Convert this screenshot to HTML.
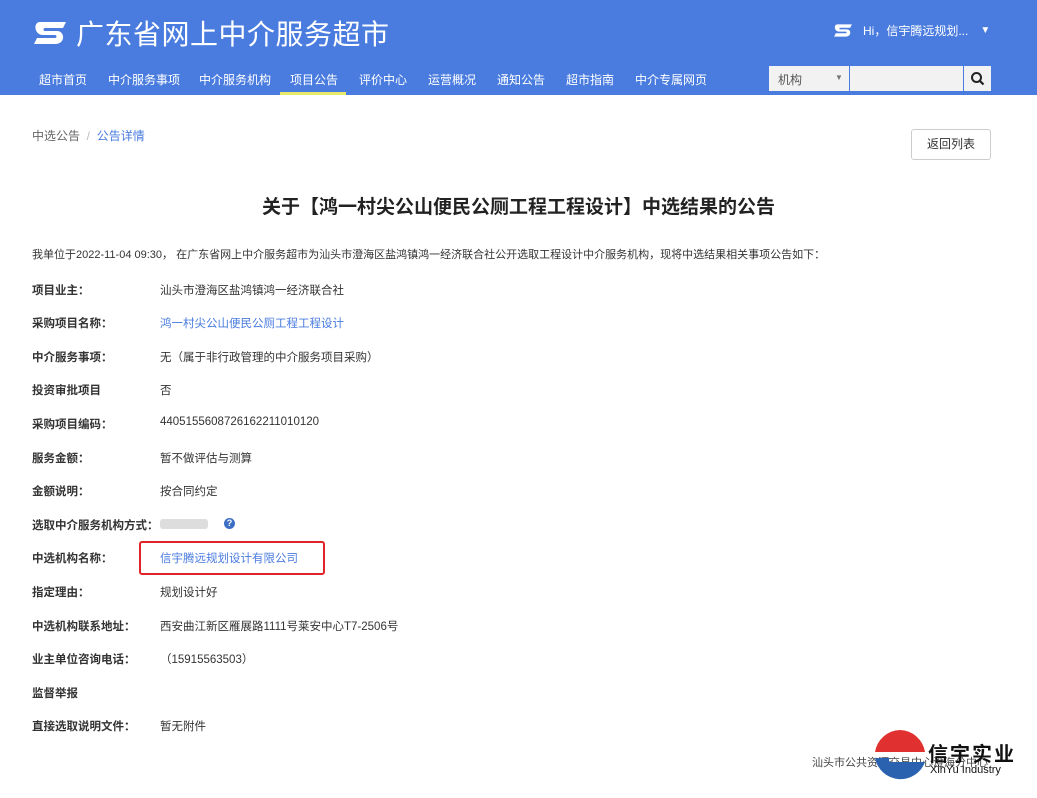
<!DOCTYPE html>
<html><head><meta charset="utf-8"><style>
*{margin:0;padding:0;box-sizing:border-box}
body{width:1037px;height:798px;overflow:hidden;background:#fff;font-family:"Liberation Sans","Noto Sans CJK SC",sans-serif;color:#333;position:relative}
.hdr{position:absolute;left:0;top:0;width:1037px;height:95px;background:#4a7ce0}
.logo{position:absolute;left:32px;top:13px;color:#fff;font-size:28px;display:flex;align-items:center}
.logo span{margin-left:8px;letter-spacing:0.5px}
.nav{position:absolute;top:71px;left:0;font-size:12px;color:#fff}
.nav a{position:absolute;white-space:nowrap;top:0}
.act{position:absolute;left:280px;top:92px;width:66px;height:3px;background:#e8e86a}
.user{position:absolute;left:833px;top:22px;color:#fff;font-size:12px;display:flex;align-items:center}
.sel{position:absolute;left:769px;top:66px;width:80px;height:25px;background:#f2f2f2;font-size:12px;padding:5px 9px;color:#555}
.inp{position:absolute;left:850px;top:66px;width:113px;height:25px;background:#f2f2f2}
.sbtn{position:absolute;left:964px;top:66px;width:27px;height:25px;background:#f2f2f2}
.bc{position:absolute;left:32px;top:127px;font-size:12px;color:#666}
.bc b{font-weight:normal;color:#4a7ce0}
.back{position:absolute;left:911px;top:129px;width:80px;height:31px;border:1px solid #ccc;border-radius:3px;font-size:12px;text-align:center;line-height:29px;color:#333}
h1{position:absolute;left:0;width:1037px;top:192px;text-align:center;font-size:19px;font-weight:bold;color:#222}
.intro{position:absolute;left:32px;top:246px;font-size:11px;white-space:nowrap}
.row{position:absolute;left:32px;font-size:11.5px;white-space:nowrap}
.row .l{position:absolute;left:0;font-weight:bold;color:#333}
.row .v{position:absolute;left:128px}
.blue{color:#4a7ce0}
.redbox{position:absolute;left:139px;top:541px;width:186px;height:34px;border:2px solid #e0252a;border-radius:3px}
.foot{position:absolute;left:812px;top:754px;font-size:11px;color:#444}
</style></head><body>
<div class="hdr">
 <div class="logo"><svg width="36" height="26" viewBox="0 0 36 26"><path d="M8 2h26l-3 6H13c-2 0-2 3 0 3h12c8 0 9 13-2 13H2l3-6h18c2 0 2-3 0-3H11C2 15 1 2 8 2z" fill="#fff"/></svg><span>广东省网上中介服务超市</span></div>
 <div class="user"><svg width="20" height="15" viewBox="0 0 36 26"><path d="M8 2h26l-3 6H13c-2 0-2 3 0 3h12c8 0 9 13-2 13H2l3-6h18c2 0 2-3 0-3H11C2 15 1 2 8 2z" fill="#fff"/></svg><span style="margin-left:10px">Hi，信宇腾远规划...</span><span style="margin-left:12px;font-size:10px">▼</span></div>
 <div class="nav">
  <a style="left:39px">超市首页</a><a style="left:108px">中介服务事项</a><a style="left:199px">中介服务机构</a><a style="left:290px">项目公告</a><a style="left:359px">评价中心</a><a style="left:428px">运营概况</a><a style="left:497px">通知公告</a><a style="left:566px">超市指南</a><a style="left:635px">中介专属网页</a>
 </div>
 <div class="act"></div>
 <div class="sel">机构<span style="position:absolute;left:66px;top:7px;font-size:8px;color:#777">▼</span></div>
 <div class="inp"></div>
 <div class="sbtn"><svg width="27" height="25" viewBox="0 0 27 25"><circle cx="12.5" cy="11.5" r="4.5" fill="none" stroke="#222" stroke-width="2"/><path d="M16 15l3.5 3.5" stroke="#222" stroke-width="2.2"/></svg></div>
</div>
<div class="bc">中选公告 &nbsp;<span style="color:#bbb">/</span>&nbsp; <b>公告详情</b></div>
<div class="back">返回列表</div>
<h1>关于【鸿一村尖公山便民公厕工程工程设计】中选结果的公告</h1>
<div class="intro">我单位于2022-11-04 09:30， 在广东省网上中介服务超市为汕头市澄海区盐鸿镇鸿一经济联合社公开选取工程设计中介服务机构，现将中选结果相关事项公告如下：</div>
<div class="row" style="top:282px"><span class="l">项目业主：</span><span class="v">汕头市澄海区盐鸿镇鸿一经济联合社</span></div>
<div class="row" style="top:315px"><span class="l">采购项目名称：</span><span class="v blue">鸿一村尖公山便民公厕工程工程设计</span></div>
<div class="row" style="top:349px"><span class="l">中介服务事项：</span><span class="v">无（属于非行政管理的中介服务项目采购）</span></div>
<div class="row" style="top:382px"><span class="l">投资审批项目</span><span class="v">否</span></div>
<div class="row" style="top:416px"><span class="l">采购项目编码：</span><span class="v">440515560872616221101012​0</span></div>
<div class="row" style="top:450px"><span class="l">服务金额：</span><span class="v">暂不做评估与测算</span></div>
<div class="row" style="top:483px"><span class="l">金额说明：</span><span class="v">按合同约定</span></div>
<div class="row" style="top:517px"><span class="l">选取中介服务机构方式：</span><span class="v" style="top:2px;width:48px;height:10px;background:#ddd;border-radius:3px"></span><span style="position:absolute;left:192px;top:1px;width:11px;height:11px;border-radius:50%;background:#3d6fc4;color:#fff;font-size:9px;text-align:center;line-height:11px;font-weight:bold">?</span></div>
<div class="row" style="top:550px"><span class="l">中选机构名称：</span><span class="v blue">信宇腾远规划设计有限公司</span></div>
<div class="redbox"></div>
<div class="row" style="top:584px"><span class="l">指定理由：</span><span class="v">规划设计好</span></div>
<div class="row" style="top:618px"><span class="l">中选机构联系地址：</span><span class="v">西安曲江新区雁展路1111号莱安中心T7-2506号</span></div>
<div class="row" style="top:651px"><span class="l">业主单位咨询电话：</span><span class="v">（15915563503）</span></div>
<div class="row" style="top:685px"><span class="l">监督举报</span></div>
<div class="row" style="top:718px"><span class="l">直接选取说明文件：</span><span class="v">暂无附件</span></div>
<div class="foot">汕头市公共资源交易中心澄海分中心</div>
<svg style="position:absolute;left:872px;top:728px" width="56" height="56" viewBox="0 0 56 56"><path d="M28 2A26 26 0 0 0 3 24h50A26 26 0 0 0 28 2z" fill="#e03030"/><path d="M3 30a26 26 0 0 0 50 4H20c-4 0-4-4 0-4z" fill="#2a62b0"/><path d="M2 27h52" stroke="#fff" stroke-width="3"/></svg>
<div style="position:absolute;left:928px;top:738px;font-size:20px;font-weight:bold;color:#111;letter-spacing:2px">信宇实业</div>
<div style="position:absolute;left:930px;top:764px;font-size:11px;color:#111">XinYu Industry</div>
</body></html>
